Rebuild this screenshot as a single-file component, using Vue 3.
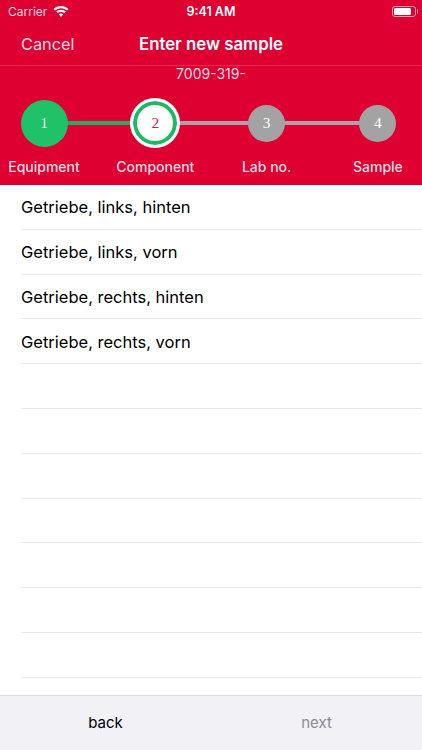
<script setup>
const steps = [
  { n: 1, label: 'Equipment', state: 'done' },
  { n: 2, label: 'Component', state: 'current' },
  { n: 3, label: 'Lab no.', state: 'todo' },
  { n: 4, label: 'Sample', state: 'todo' },
]
const rows = ['Getriebe, links, hinten', 'Getriebe, links, vorn', 'Getriebe, rechts, hinten', 'Getriebe, rechts, vorn', '', '', '', '', '', '', '', '']
</script>

<template>
  <div class="app">
    <header class="head">
      <div class="status">
        <div class="status-left">
          <span>Carrier</span>
          <svg class="wifi" width="16" height="12" viewBox="0 0 16 12">
            <path d="M8 2.200c2.300 0 4.400.9 6 2.400l1.500-1.500C13.500 1.200 10.900 0 8 0S2.500 1.200.5 3.100L2 4.600c1.600-1.500 3.700-2.400 6-2.400z" fill="#fff"/>
            <path d="M8 5.900c1.300 0 2.400.5 3.300 1.200l1.500-1.500C11.500 4.400 9.800 3.700 8 3.700s-3.500.7-4.800 1.900l1.500 1.500c.9-.7 2-1.200 3.300-1.200z" fill="#fff"/>
            <path d="M8 7.500c-.9 0-1.600.3-2.200.8L8 11l2.200-2.700c-.6-.5-1.300-.8-2.200-.8z" fill="#fff"/>
          </svg>
        </div>
        <span class="clock">9:41 AM</span>
        <div class="battery"><i class="charge"></i><i class="nub"></i></div>
      </div>
      <div class="nav">
        <span class="cancel">Cancel</span>
        <span class="title">Enter new sample</span>
      </div>
      <div class="code">7009-319-</div>
      <div class="stepper">
        <div class="track">
          <i class="seg green"></i>
          <i class="seg grey"></i>
          <i class="seg grey"></i>
        </div>
        <div v-for="s in steps" :key="s.n" class="step">
          <div class="dot-box">
            <div class="dot" :class="s.state"><span>{{ s.n }}</span></div>
          </div>
          <span class="label">{{ s.label }}</span>
        </div>
      </div>
    </header>
    <main class="list">
      <div v-for="(r, i) in rows" :key="i" class="row"><span>{{ r }}</span></div>
    </main>
    <footer class="foot">
      <span class="btn">back</span>
      <span class="btn off">next</span>
    </footer>
  </div>
</template>

<style>
html, body { margin: 0; padding: 0; background: #fff; }
</style>

<style scoped>
.app {
  width: 422px;
  height: 750px;
  display: flex;
  flex-direction: column;
  overflow: hidden;
  font-family: Inter, "Liberation Sans", sans-serif;
  background: #fff;
}
.head {
  background: #dd0031;
  color: #fff;
  flex: none;
  height: 185px;
  display: flex;
  flex-direction: column;
}
.status {
  height: 22px;
  padding: 0 6px 0 8px;
  display: flex;
  align-items: center;
  justify-content: space-between;
  position: relative;
  font-size: 12px;
}
.status-left { display: flex; align-items: center; gap: 6px; color: #fbdde3; }
.wifi { margin-top: 1px; }
.clock {
  position: absolute;
  left: 0;
  right: 0;
  text-align: center;
  font-weight: 600;
  font-size: 12.500px;
}
.battery {
  width: 24px;
  height: 11px;
  border: 1px solid #f59fb2;
  border-radius: 3px;
  box-sizing: border-box;
  padding: 1px;
  display: flex;
  position: relative;
}
.charge { flex: 1; background: #fff; border-radius: 1.500px; margin-right: 3px; }
.nub {
  position: absolute;
  right: -3px;
  top: 2px;
  width: 1.500px;
  height: 5px;
  background: #f59fb2;
  border-radius: 0 1px 1px 0;
}
.nav {
  height: 44px;
  position: relative;
  display: flex;
  align-items: center;
  border-bottom: 1px solid #e8294f;
  box-sizing: border-box;
  padding-left: 21px;
}
.cancel { font-size: 16.300px; color: #fbdde3; }
.title {
  position: absolute;
  left: 0;
  right: 0;
  text-align: center;
  font-size: 16.800px;
  font-weight: 600;
}
.code {
  text-align: center;
  font-size: 14px;
  color: #fbdde3;
  height: 16px;
  line-height: 16px;
}
.stepper {
  position: relative;
  display: flex;
  gap: 111.300px;
  padding-left: 44px;
  margin-top: 16px;
}
.track {
  position: absolute;
  left: 44px;
  top: 23px;
  width: 334px;
  height: 4px;
  display: flex;
}
.seg { display: block; width: 111.300px; }
.seg.green { background: #2fa75f; }
.seg.grey { background: #b3a0a5; }
.step { width: 0; display: flex; flex-direction: column; align-items: center; position: relative; }
.dot-box { height: 50px; display: flex; align-items: center; justify-content: center; }
.dot {
  border-radius: 50%;
  display: flex;
  align-items: center;
  justify-content: center;
  box-sizing: border-box;
  flex: none;
  font-family: "Liberation Serif", serif;
  font-size: 15.500px;
}
.dot.done { width: 47px; height: 47px; background: #1fc267; color: #e6f7ec; }
.dot.current {
  width: 50px;
  height: 50px;
  background: #fff;
  border: 3.500px solid #fff;
  box-shadow: inset 0 0 0 4px #1fb863;
  color: #cc2050;
}
.dot.todo { width: 37px; height: 37px; background: #a3a3a3; color: #fff; }
.label {
  margin-top: 10px;
  font-size: 14px;
  font-weight: 500;
  line-height: 17px;
  color: #fbdde3;
  white-space: nowrap;
}
.list { flex: 1; min-height: 0; overflow: hidden; padding-left: 21px; }
.row {
  height: 44.800px;
  box-sizing: border-box;
  border-bottom: 1px solid #e9e9ec;
  display: flex;
  align-items: center;
  padding-top: 1px;
  font-size: 16.500px;
  color: #000;
}
.foot {
  flex: none;
  height: 55px;
  padding-bottom: 2px;
  box-sizing: border-box;
  background: #f1f1f6;
  border-top: 1px solid #d9d9dd;
  display: grid;
  grid-template-columns: 1fr 1fr;
  align-items: center;
  justify-items: center;
}
.btn { font-size: 15px; color: #000; }
.btn.off { color: #8b8b90; }
</style>
